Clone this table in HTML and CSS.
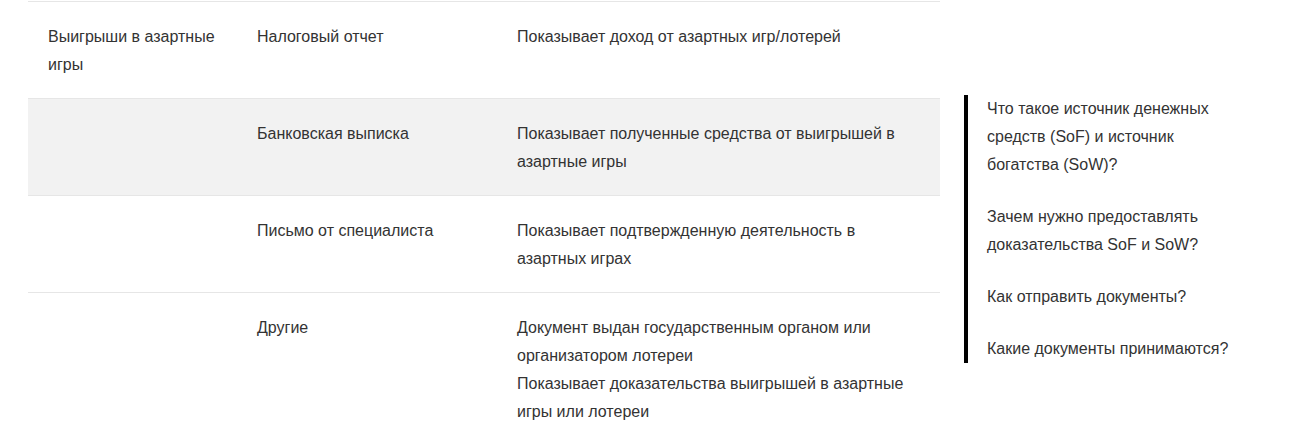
FILE: index.html
```html
<!DOCTYPE html>
<html lang="ru">
<head>
<meta charset="utf-8">
<link rel="stylesheet" href="styles.css">
</head>
<body>
<div class="page">
  <div class="table">
    <div class="row">
      <div class="cell c1">Выигрыши в азартные игры</div>
      <div class="cell c2">Налоговый отчет</div>
      <div class="cell c3"><p>Показывает доход от азартных игр/лотерей</p></div>
    </div>
    <div class="row alt">
      <div class="cell c1"></div>
      <div class="cell c2">Банковская выписка</div>
      <div class="cell c3"><p>Показывает полученные средства от выигрышей в азартные игры</p></div>
    </div>
    <div class="row">
      <div class="cell c1"></div>
      <div class="cell c2">Письмо от специалиста</div>
      <div class="cell c3"><p>Показывает подтвержденную деятельность в азартных играх</p></div>
    </div>
    <div class="row">
      <div class="cell c1"></div>
      <div class="cell c2">Другие</div>
      <div class="cell c3">
        <p>Документ выдан государственным органом или организатором лотереи</p>
        <p>Показывает доказательства выигрышей в азартные игры или лотереи</p>
      </div>
    </div>
  </div>
  <aside class="toc">
    <a class="toc-item">Что такое источник денежных средств (SoF) и источник богатства (SoW)?</a>
    <a class="toc-item">Зачем нужно предоставлять доказательства SoF и SoW?</a>
    <a class="toc-item">Как отправить документы?</a>
    <a class="toc-item">Какие документы принимаются?</a>
  </aside>
</div>
</body>
</html>
```

FILE: styles.css
```css
html, body {
  margin: 0;
  padding: 0;
  background: #fff;
}
body {
  font-family: "Liberation Sans", Arial, sans-serif;
  font-size: 16px;
  line-height: 28px;
  color: #333;
}
.page {
  display: flex;
  align-items: flex-start;
  padding: 1px 0 0 28px;
}
.table {
  width: 912px;
  flex: none;
}
.row {
  display: flex;
  border-top: 1px solid #e6e6e6;
  padding: 21px 0 19px;
}
.row.alt {
  background: #f2f2f2;
}
.cell {
  padding: 0 20px;
  box-sizing: border-box;
}
.c1 { width: 209px; }
.c2 { width: 260px; }
.c3 { width: 443px; }
.c3 p { margin: 0; }
.toc {
  margin: 94px 0 0 24px;
  border-left: 4px solid #000;
  padding-left: 19px;
  width: 252px;
  display: flex;
  flex-direction: column;
  gap: 24px;
}
.toc-item {
  display: block;
  color: #333;
  text-decoration: none;
}
```
